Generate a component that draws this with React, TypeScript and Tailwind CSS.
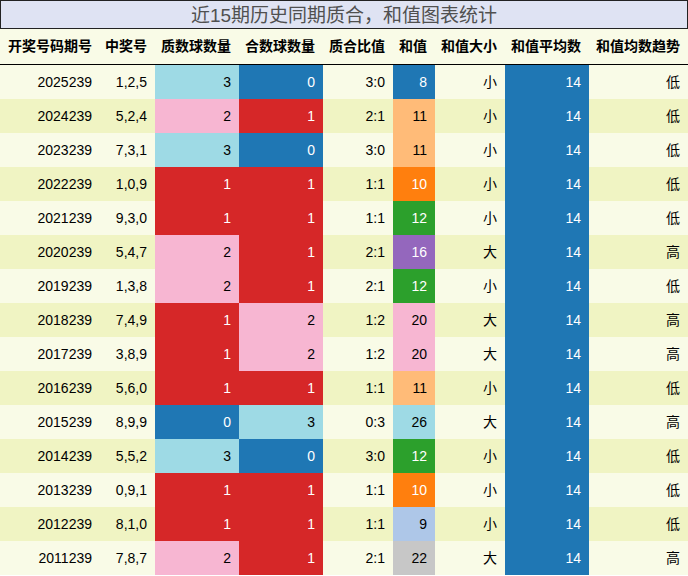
import React from "react";

const BLUE = "bg-[#1f77b4] text-white";
const RED = "bg-[#d62728] text-white";
const LBLUE = "bg-[#9edae5] text-black";
const PINK = "bg-[#f7b6d2] text-black";
const ORANGE = "bg-[#ff7f0e] text-white";
const LORANGE = "bg-[#ffbb78] text-black";
const GREEN = "bg-[#2ca02c] text-white";
const PURPLE = "bg-[#9467bd] text-white";
const STEEL = "bg-[#aec7e8] text-black";
const GRAY = "bg-[#c7c7c7] text-black";

const cntColor = (n: number) => (n === 0 ? BLUE : n === 1 ? RED : n === 2 ? PINK : LBLUE);

const sumColor: Record<number, string> = {
  8: BLUE,
  9: STEEL,
  10: ORANGE,
  11: LORANGE,
  12: GREEN,
  16: PURPLE,
  20: PINK,
  22: GRAY,
  26: LBLUE,
};

type Row = [string, string, number, number, number];
const rows: Row[] = [
  ["2025239", "1,2,5", 3, 0, 8],
  ["2024239", "5,2,4", 2, 1, 11],
  ["2023239", "7,3,1", 3, 0, 11],
  ["2022239", "1,0,9", 1, 1, 10],
  ["2021239", "9,3,0", 1, 1, 12],
  ["2020239", "5,4,7", 2, 1, 16],
  ["2019239", "1,3,8", 2, 1, 12],
  ["2018239", "7,4,9", 1, 2, 20],
  ["2017239", "3,8,9", 1, 2, 20],
  ["2016239", "5,6,0", 1, 1, 11],
  ["2015239", "8,9,9", 0, 3, 26],
  ["2014239", "5,5,2", 3, 0, 12],
  ["2013239", "0,9,1", 1, 1, 10],
  ["2012239", "8,1,0", 1, 1, 9],
  ["2011239", "7,8,7", 2, 1, 22],
];

const headers = ["开奖号码期号", "中奖号", "质数球数量", "合数球数量", "质合比值", "和值", "和值大小", "和值平均数", "和值均数趋势"];

const GRID = "grid grid-cols-[100px_55px_84px_84px_70px_42px_70px_84px_99px]";
const FONT = { fontFamily: '"Liberation Sans", "Noto Sans CJK SC", sans-serif' };

export default function App() {
  return (
    <div className="w-[688px] h-[576px] bg-white text-[14px]" style={FONT}>
      <div className="h-[29px] border border-[#222] bg-[#dfe3f3] flex items-center justify-center text-[19px] text-[#505050] leading-none pt-[2px]">
        近15期历史同期质合，和值图表统计
      </div>
      <div className={`${GRID} h-[36px] bg-[#f9fbe7] border-b border-black`}>
        {headers.map((h) => (
          <div key={h} className="flex items-center justify-end pr-2 font-bold text-black whitespace-nowrap">
            {h}
          </div>
        ))}
      </div>
      {rows.map(([issue, nums, p, c, s], i) => {
        const rowBg = i % 2 === 0 ? "bg-[#f9fbe7]" : "bg-[#f0f4c3]";
        const cells: [string, string][] = [
          [issue, "text-black"],
          [nums, "text-black"],
          [String(p), cntColor(p)],
          [String(c), cntColor(c)],
          [`${p}:${c}`, "text-black"],
          [String(s), sumColor[s]],
          [s >= 14 ? "大" : "小", "text-black"],
          ["14", BLUE],
          [s >= 14 ? "高" : "低", "text-black"],
        ];
        return (
          <div key={issue} className={`${GRID} h-[34px] ${rowBg}`}>
            {cells.map(([t, cls], j) => (
              <div key={j} className={`flex items-center justify-end pr-2 ${cls}`}>
                {t}
              </div>
            ))}
          </div>
        );
      })}
    </div>
  );
}
